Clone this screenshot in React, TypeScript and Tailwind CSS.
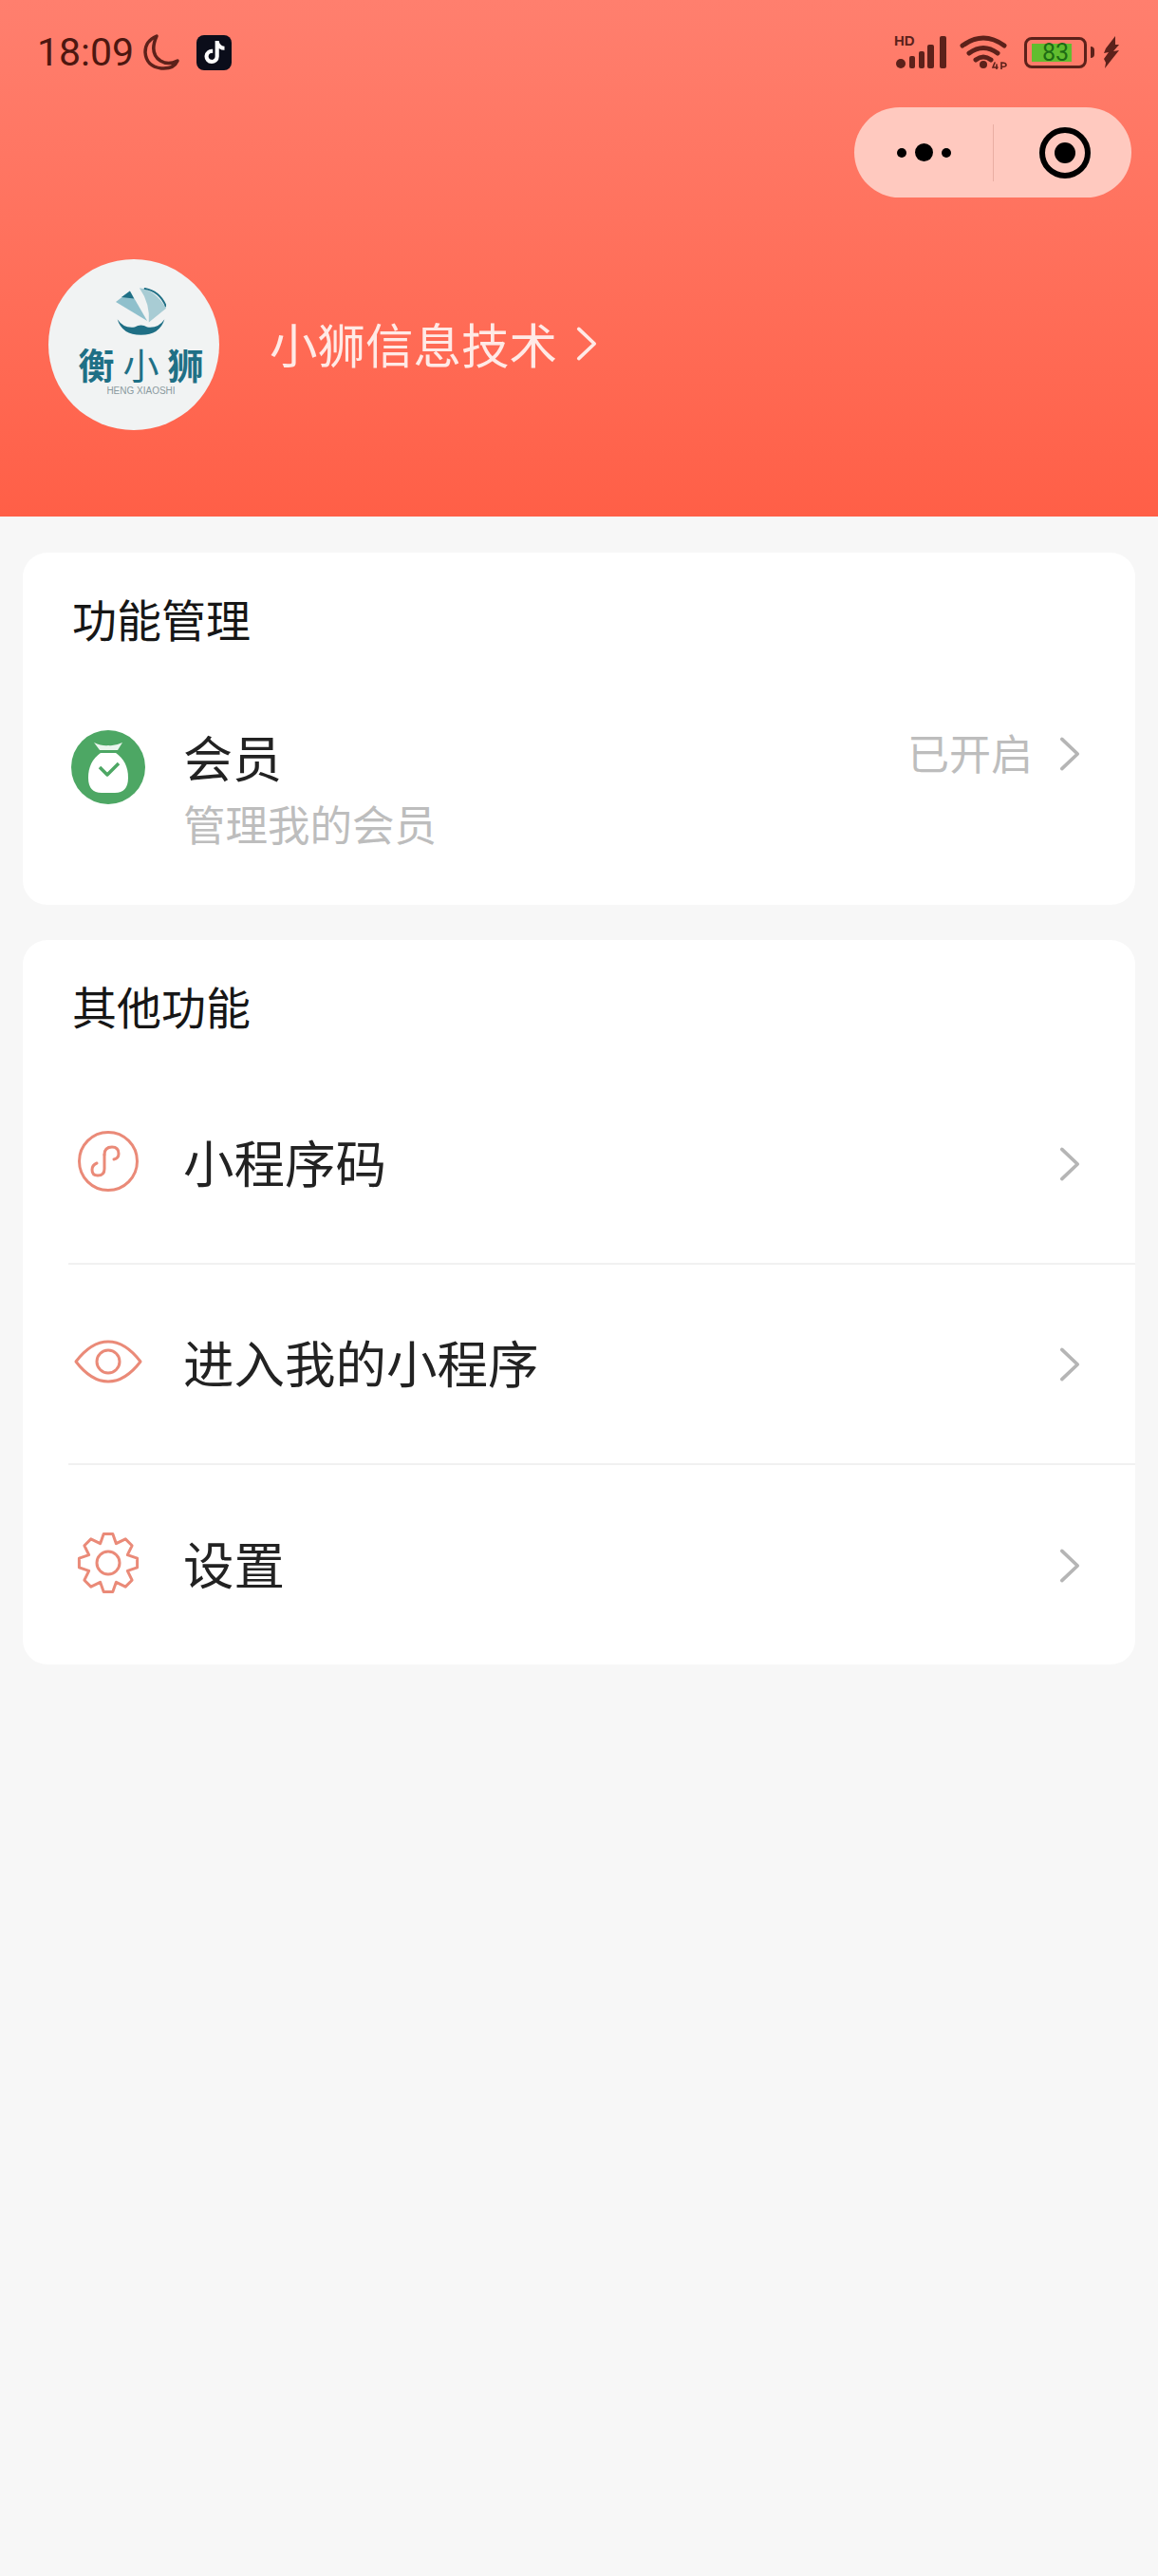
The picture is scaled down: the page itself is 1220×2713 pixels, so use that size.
import React, { FC } from "react";
import { FaTiktok } from "react-icons/fa6";

const CJK = "font-['Noto_Sans_CJK_SC','Noto_Sans',sans-serif]";

// grey arrow used at the end of each row
const Chevron: FC<{ className?: string }> = ({ className }) => (
  <svg viewBox="0 0 24 40" className={className} fill="none" stroke="currentColor" strokeWidth="4" strokeLinecap="round" strokeLinejoin="round">
    <path d="M3 3 L21 20 L3 37" />
  </svg>
);

const Signal = () => (
  <div className="relative w-[56px] h-[36px]">
    <span className="absolute left-0 -top-[1px] text-[15px] leading-[13px] font-bold text-[#5c211a] font-['Liberation_Sans',sans-serif]">HD</span>
    <svg viewBox="0 0 56 36" className="w-[56px] h-[36px]" fill="#5c211a">
      <circle cx="7" cy="30" r="5" />
      <rect x="16" y="22" width="6" height="13" rx="2" />
      <rect x="26" y="17" width="6" height="18" rx="2" />
      <rect x="35" y="10" width="7" height="25" rx="2" />
      <rect x="48" y="1" width="7" height="34" rx="2" />
    </svg>
  </div>
);

const Wifi = () => (
  <svg viewBox="0 0 52 36" className="w-[52px] h-[36px]" fill="none" stroke="#5c211a" strokeLinecap="round">
    <path d="M3 11 Q25 -5 47 11" strokeWidth="5" />
    <path d="M10 19 Q25 8 40 19" strokeWidth="5" />
    <path d="M17 26 Q25 20 33 26" strokeWidth="5" />
    <circle cx="25" cy="31" r="4" fill="#5c211a" stroke="none" />
    <path d="M37 29 L35 34 L40 34 M39 31 L39 36 M44 36 L44 29 Q49 29 49 31.5 Q49 33.5 44 33.5" strokeWidth="1.6" />
  </svg>
);

const Battery = () => (
  <div className="flex items-center">
    <div className="w-[66px] h-[33px] rounded-[8px] border-[3px] border-[#5c211a] p-[4px] pl-[5px] flex">
      <div className="w-[42px] bg-[#62bd2f] flex items-center justify-center">
        <span className="text-[25px] leading-none text-[#1d6b14] pl-[8px] font-['Roboto',sans-serif]">83</span>
      </div>
    </div>
    <div className="w-[4px] h-[12px] ml-[4px] rounded-r-sm bg-[#5c211a]" />
  </div>
);

const Logo = () => (
  <div className="w-[180px] h-[180px] rounded-full bg-[#f1f3f3] flex flex-col items-center pt-[30px] pl-[15px]">
    <svg viewBox="0 0 160 150" className="w-[53px] h-[50px]">
      <path d="M0 45 L45 10 L100 105 Z" fill="#8fc0cc" />
      <path d="M18 30 L45 10 L58 34 Z" fill="#1f6f85" />
      <path d="M75 0 Q125 5 160 65 L105 110 Q110 50 75 0Z" fill="#a8ccd4" />
      <path d="M90 2 Q140 10 160 60" fill="none" stroke="#1f6f85" strokeWidth="6" />
      <path d="M5 100 Q25 130 60 125 Q80 112 100 125 Q135 130 155 100 Q140 150 80 150 Q20 150 5 100Z" fill="#1f6f85" />
    </svg>
    <div className={`flex items-center text-[#1f7086] font-bold mt-[10px] gap-[9px] ${CJK}`}>
      <span className="text-[38px] leading-[40px]">衡</span>
      <span className="text-[38px] leading-[40px] font-normal">小</span>
      <span className="text-[38px] leading-[40px]">狮</span>
    </div>
    <span className="text-[10px] leading-[12px] mt-[3px] text-[#8a9a9f] font-['Liberation_Sans',sans-serif]">HENG XIAOSHI</span>
  </div>
);

const MoneyBag = () => (
  <svg viewBox="0 0 78 78" className="w-[78px] h-[78px]">
    <circle cx="39" cy="39" r="39" fill="#4da764" />
    <path d="M24 13 Q33 17 39 16 Q46 17 54 13 L49 21 L30 21 Z" fill="#eaf5ed" />
    <path d="M31 24 L47 24 Q60 33 60 50 Q60 66 46 66 L32 66 Q18 66 18 50 Q18 33 31 24Z" fill="#ffffff" />
    <path d="M30 39 L38 47 L50 35" fill="none" stroke="#4da764" strokeWidth="3.5" strokeLinejoin="round" />
  </svg>
);

const MiniProgram = () => (
  <svg viewBox="0 0 66 66" className="w-[66px] h-[66px]" fill="none" stroke="#ea8a78" strokeWidth="3">
    <circle cx="33" cy="33" r="30.5" />
    <path d="M29 26 L29 41 Q29 48 22 48 Q16 48 16 42 Q16 37 21 35" strokeLinecap="round" />
    <path d="M29 26 Q29 18 37 18 Q44 18 44 25 Q44 30 39 31" strokeLinecap="round" />
  </svg>
);

const Eye = () => (
  <svg viewBox="0 0 72 46" className="w-[72px] h-[46px]" fill="none" stroke="#ea8a78" strokeWidth="3">
    <path d="M2 23 Q18 2 36 2 Q54 2 70 23 Q54 44 36 44 Q18 44 2 23Z" strokeLinejoin="round" />
    <circle cx="36" cy="23" r="12" />
  </svg>
);

// 8 teeth, one straight up
const gearPoints = [0, 45, 90, 135, 180, 225, 270, 315]
  .flatMap((deg) => [
    [deg - 22.5, 22],
    [deg - 9, 31],
    [deg + 9, 31],
  ])
  .map(([deg, r]) => {
    const a = (deg * Math.PI) / 180;
    return `${(34 + r * Math.sin(a)).toFixed(1)},${(34 - r * Math.cos(a)).toFixed(1)}`;
  })
  .join(" ");

const Gear = () => (
  <svg viewBox="0 0 68 68" className="w-[68px] h-[68px]" fill="none" stroke="#ea8a78" strokeWidth="3" strokeLinejoin="round">
    <polygon points={gearPoints} />
    <circle cx="34" cy="34" r="12" />
  </svg>
);

const rows = [
  { label: "小程序码", icon: <MiniProgram /> },
  { label: "进入我的小程序", icon: <Eye /> },
  { label: "设置", icon: <Gear /> },
];

export default function App() {
  return (
    <div className={`w-[1220px] h-[2713px] bg-[#f7f7f7] overflow-hidden ${CJK}`}>
      {/* header */}
      <div className="h-[544px] bg-gradient-to-b from-[#ff7f6e] to-[#ff5f47]">
        {/* status bar */}
        <div className="h-[113px] flex items-start justify-between pl-[39px] pr-[40px] pt-[34px]">
          <div className="flex items-center h-[42px]">
            <span className="text-[41px] leading-[42px] text-[#4d1710] font-['Roboto',sans-serif]">18:09</span>
            <svg viewBox="0 0 38 38" className="w-[38px] h-[38px] ml-[10px]" fill="none" stroke="#5c211a" strokeWidth="3.5" strokeLinejoin="round">
              <path d="M14 2 Q6 20 18 28 Q26 33 36 28 Q32 37 19 36 Q3 34 2 19 Q2 7 14 2Z" />
            </svg>
            <div className="w-[37px] h-[37px] ml-[18px] rounded-[8px] bg-[#0b0d1a] flex items-center justify-center">
              <FaTiktok className="text-white w-[24px] h-[24px]" />
            </div>
          </div>
          <div className="flex items-center h-[42px]">
            <Signal />
            <div className="ml-[13px]"><Wifi /></div>
            <div className="ml-[16px]"><Battery /></div>
            <svg viewBox="0 0 18 34" className="w-[18px] h-[34px] ml-[9px]" fill="#5c211a">
              <path d="M13 0 L3 13 L1 18 L6 17 L1 24 L3 28 L2 34 L9 25 L17 15 L11 16 L17 9 L13 9Z" />
            </svg>
          </div>
        </div>
        {/* capsule */}
        <div className="flex justify-end pr-[28px]">
          <div className="w-[292px] h-[95px] rounded-full bg-[#ffc9bf] flex items-center">
            <div className="w-[146px] flex items-center justify-center gap-[9px]">
              <span className="w-[10px] h-[10px] rounded-full bg-black" />
              <span className="w-[19px] h-[19px] rounded-full bg-black" />
              <span className="w-[10px] h-[10px] rounded-full bg-black" />
            </div>
            <div className="w-[1px] h-[60px] bg-[#e9aea3]" />
            <div className="flex-1 flex items-center justify-center pl-[4px]">
              <div className="w-[54px] h-[54px] rounded-full border-[6px] border-black flex items-center justify-center">
                <span className="w-[22px] h-[22px] rounded-full bg-black" />
              </div>
            </div>
          </div>
        </div>
        {/* profile */}
        <div className="flex items-center pl-[51px] mt-[65px]">
          <Logo />
          <span className="ml-[53px] -mt-[5px] text-[50.5px] leading-[64px] text-[#ffeae6]">小狮信息技术</span>
          <Chevron className="ml-[20px] -mt-[3px] w-[22px] h-[44px] text-[#ffeae6]" />
        </div>
      </div>

      {/* 功能管理 */}
      <div className="mx-[24px] mt-[38px] h-[371px] bg-white rounded-[26px] pl-[48px] pt-[37px]">
        <div className="text-[47px] leading-[64px] pl-[4px] text-[#161616]">功能管理</div>
        <div className="flex items-start mt-[86px] pr-[58px]">
          <div className="w-[84px] flex justify-center"><MoneyBag /></div>
          <div className="ml-[37px] flex-1 -mt-[7px]">
            <div className="text-[52px] leading-[70px] text-[#222222]">会员</div>
            <div className="text-[44.5px] leading-[70px] text-[#bdbdbd]">管理我的会员</div>
          </div>
          <div className="flex items-center -mt-[9px]">
            <span className="text-[44px] leading-[64px] text-[#bdbdbd]">已开启</span>
            <Chevron className="ml-[28px] mt-[3px] w-[22px] h-[38px] text-[#b5b5b5]" />
          </div>
        </div>
      </div>

      {/* 其他功能 */}
      <div className="mx-[24px] mt-[37px] h-[763px] bg-white rounded-[26px] pt-[37px]">
        <div className="text-[47px] leading-[64px] pl-[52px] text-[#161616]">其他功能</div>
        <div className="mt-[30px] pl-[48px]">
          {rows.map((row, index) => (
            <div key={row.label} className={`h-[211px] flex items-center pr-[58px] ${index < rows.length - 1 ? "border-b-2 border-[#f1f1f1]" : ""}`}>
              <div className="w-[84px] -mt-[6px] flex justify-center">{row.icon}</div>
              <span className="ml-[37px] -mt-[6px] flex-1 text-[53.5px] leading-[70px] text-[#222222]">{row.label}</span>
              <Chevron className="w-[22px] h-[38px] text-[#b5b5b5]" />
            </div>
          ))}
        </div>
      </div>
    </div>
  );
}
